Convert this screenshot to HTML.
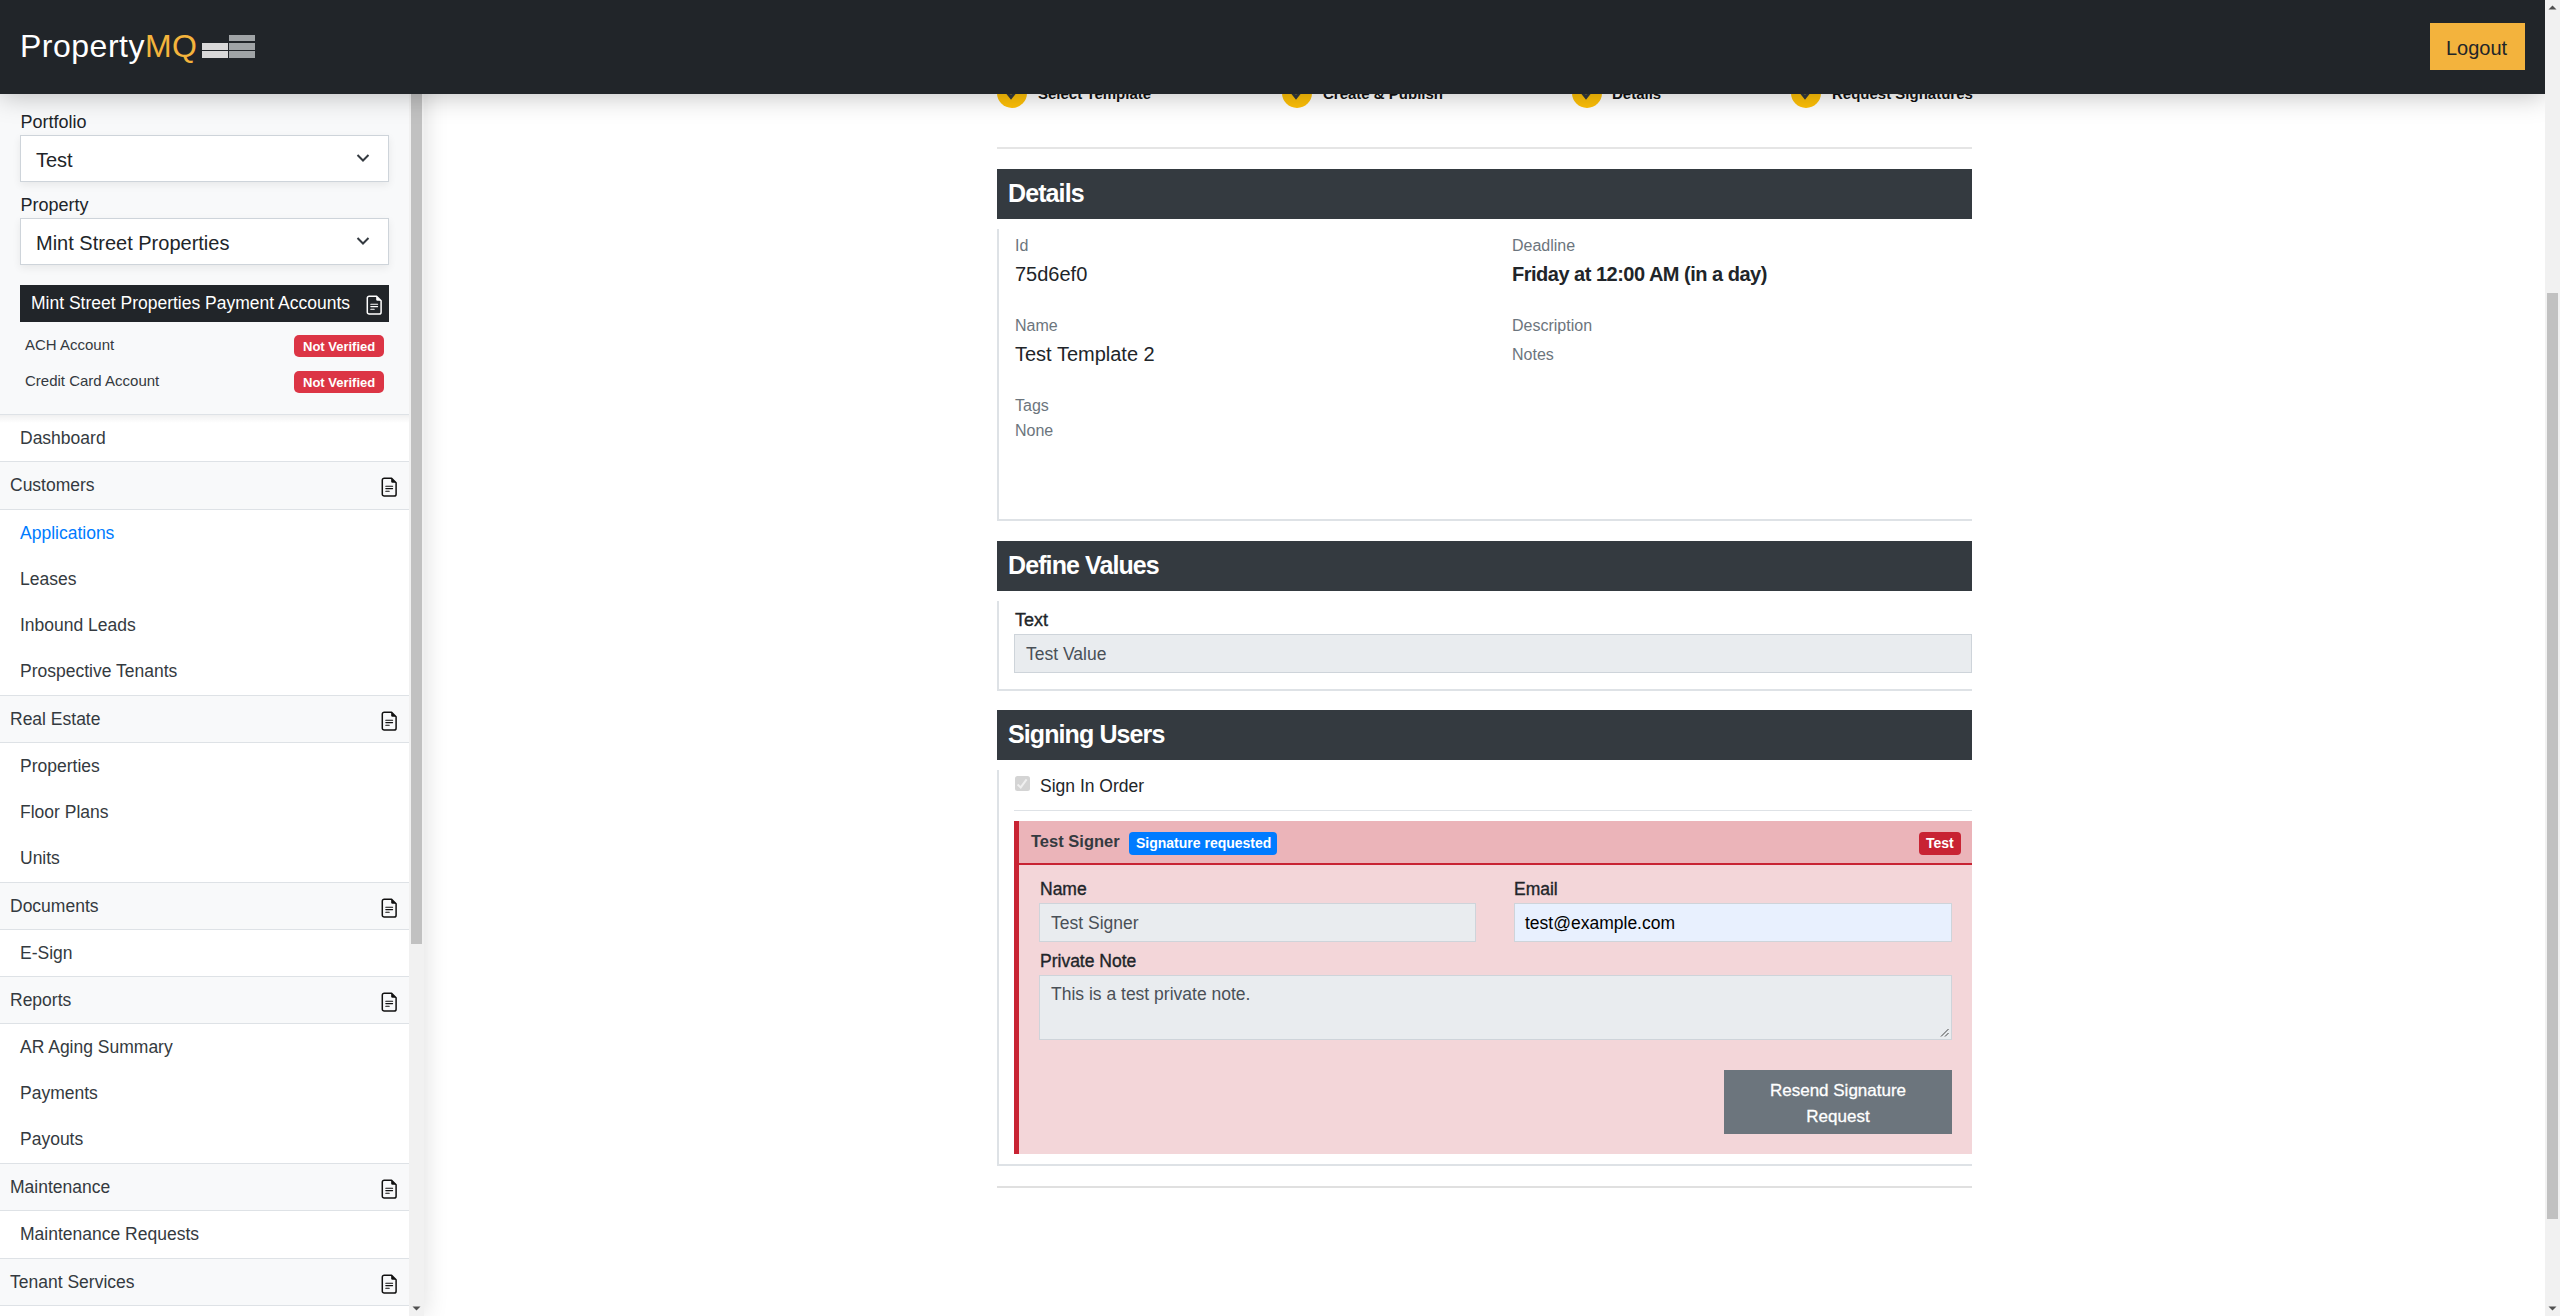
<!DOCTYPE html>
<html><head><meta charset="utf-8"><style>
*{box-sizing:border-box;margin:0;padding:0}
html,body{width:2560px;height:1316px;overflow:hidden;background:#fff;font-family:"Liberation Sans",sans-serif;color:#212529}
.a{position:absolute}
.t{position:absolute;white-space:nowrap;line-height:1}
#hdr{position:absolute;left:0;top:0;width:2545px;height:94px;background:#212529;z-index:20;box-shadow:0 2px 25px rgba(0,0,0,.25)}
#sb{position:absolute;left:0;top:0;width:424px;height:1316px;background:#fff;z-index:10;box-shadow:2px 0 22px rgba(0,0,0,.12)}
.ico{position:absolute;left:379px;width:20px;height:20px}
.inp{position:absolute;background:#e9ecef;border:1px solid #ced4da}
</style></head><body>
<div class="a" style="left:997px;top:78px;width:30px;height:30px;background:#ffc107;border-radius:50%"></div>
<svg class="a" style="left:1002px;top:80px;width:20px;height:20px" viewBox="0 0 20 20"><path d="M4 11L9 17.3L14 11" fill="none" stroke="#343a40" stroke-width="3"/></svg>
<div class="t" style="left:1038px;top:86.00px;font-size:15px;font-weight:bold;color:#111;">Select Template</div>
<div class="a" style="left:1282px;top:78px;width:30px;height:30px;background:#ffc107;border-radius:50%"></div>
<svg class="a" style="left:1287px;top:80px;width:20px;height:20px" viewBox="0 0 20 20"><path d="M4 11L9 17.3L14 11" fill="none" stroke="#343a40" stroke-width="3"/></svg>
<div class="t" style="left:1323px;top:86.00px;font-size:15px;font-weight:bold;color:#111;">Create &amp; Publish</div>
<div class="a" style="left:1572px;top:78px;width:30px;height:30px;background:#ffc107;border-radius:50%"></div>
<svg class="a" style="left:1577px;top:80px;width:20px;height:20px" viewBox="0 0 20 20"><path d="M4 11L9 17.3L14 11" fill="none" stroke="#343a40" stroke-width="3"/></svg>
<div class="t" style="left:1612px;top:86.00px;font-size:15px;font-weight:bold;color:#111;">Details</div>
<div class="a" style="left:1791px;top:78px;width:30px;height:30px;background:#ffc107;border-radius:50%"></div>
<svg class="a" style="left:1796px;top:80px;width:20px;height:20px" viewBox="0 0 20 20"><path d="M4 11L9 17.3L14 11" fill="none" stroke="#343a40" stroke-width="3"/></svg>
<div class="t" style="left:1832px;top:86.00px;font-size:15px;font-weight:bold;color:#111;">Request Signatures</div>
<div class="a" style="left:997px;top:147px;width:975px;height:2px;background:#e5e5e5;"></div>
<div class="a" style="left:997px;top:169px;width:975px;height:50px;background:#343a40;"></div>
<div class="t" style="left:1008px;top:181.00px;font-size:25px;font-weight:bold;color:#fff;letter-spacing:-0.9px;">Details</div>
<div class="a" style="left:997px;top:229px;width:975px;height:292px;border-left:2px solid #dee2e6;border-bottom:2px solid #dee2e6"></div>
<div class="t" style="left:1015px;top:238.00px;font-size:16px;color:#6c757d;">Id</div>
<div class="t" style="left:1015px;top:264.00px;font-size:20px;">75d6ef0</div>
<div class="t" style="left:1015px;top:318.00px;font-size:16px;color:#6c757d;">Name</div>
<div class="t" style="left:1015px;top:344.00px;font-size:20px;">Test Template 2</div>
<div class="t" style="left:1015px;top:398.00px;font-size:16px;color:#6c757d;">Tags</div>
<div class="t" style="left:1015px;top:423.00px;font-size:16px;color:#6c757d;">None</div>
<div class="t" style="left:1512px;top:238.00px;font-size:16px;color:#6c757d;">Deadline</div>
<div class="t" style="left:1512px;top:264.00px;font-size:20px;font-weight:bold;letter-spacing:-0.5px;">Friday at 12:00 AM (in a day)</div>
<div class="t" style="left:1512px;top:318.00px;font-size:16px;color:#6c757d;">Description</div>
<div class="t" style="left:1512px;top:347.00px;font-size:16px;color:#6c757d;">Notes</div>
<div class="a" style="left:997px;top:541px;width:975px;height:50px;background:#343a40;"></div>
<div class="t" style="left:1008px;top:553.00px;font-size:25px;font-weight:bold;color:#fff;letter-spacing:-0.9px;">Define Values</div>
<div class="a" style="left:997px;top:601px;width:975px;height:90px;border-left:2px solid #dee2e6;border-bottom:2px solid #dee2e6"></div>
<div class="t" style="left:1015px;top:611.00px;font-size:18px;-webkit-text-stroke:0.35px currentColor;">Text</div>
<div class="inp" style="left:1014px;top:634px;width:958px;height:39px"></div>
<div class="t" style="left:1026px;top:646.00px;font-size:17.5px;color:#495057;">Test Value</div>
<div class="a" style="left:997px;top:710px;width:975px;height:50px;background:#343a40;"></div>
<div class="t" style="left:1008px;top:722.00px;font-size:25px;font-weight:bold;color:#fff;letter-spacing:-0.9px;">Signing Users</div>
<div class="a" style="left:997px;top:770px;width:975px;height:396px;border-left:2px solid #dee2e6;border-bottom:2px solid #dee2e6"></div>
<div class="a" style="left:1015px;top:776px;width:15px;height:15px;background:#d4d4d4;border-radius:2.5px"></div>
<svg class="a" style="left:1015px;top:776px;width:15px;height:15px" viewBox="0 0 15 15"><path d="M2.6 8.6L5.7 11.4L11.6 3.4" fill="none" stroke="#efefef" stroke-width="2"/></svg>
<div class="t" style="left:1040px;top:778.00px;font-size:17.5px;">Sign In Order</div>
<div class="a" style="left:1014px;top:810px;width:958px;height:1px;background:#dee2e6;"></div>
<div class="a" style="left:1014px;top:821px;width:958px;height:333px;background:#f3d6d9;"></div>
<div class="a" style="left:1019px;top:821px;width:953px;height:42px;background:#ebb4b9;"></div>
<div class="a" style="left:1019px;top:863px;width:953px;height:2px;background:#c82333;"></div>
<div class="a" style="left:1014px;top:821px;width:5px;height:333px;background:#c82333;"></div>
<div class="t" style="left:1031px;top:833.00px;font-size:16.5px;font-weight:bold;color:#343a40;">Test Signer</div>
<div class="a" style="left:1129px;top:832px;width:148px;height:23px;background:#007bff;border-radius:4px"></div>
<div class="t" style="left:1136px;top:836.00px;font-size:14px;font-weight:bold;color:#fff;">Signature requested</div>
<div class="a" style="left:1919px;top:832px;width:42px;height:23px;background:#c82333;border-radius:4px"></div>
<div class="t" style="left:1926px;top:836.00px;font-size:14px;font-weight:bold;color:#fff;">Test</div>
<div class="t" style="left:1040px;top:881.00px;font-size:17.5px;-webkit-text-stroke:0.35px currentColor;">Name</div>
<div class="inp" style="left:1039px;top:903px;width:437px;height:39px"></div>
<div class="t" style="left:1051px;top:915.00px;font-size:17.5px;color:#495057;">Test Signer</div>
<div class="t" style="left:1514px;top:881.00px;font-size:17.5px;-webkit-text-stroke:0.35px currentColor;">Email</div>
<div class="inp" style="left:1514px;top:903px;width:438px;height:39px;background:#e8f0fe"></div>
<div class="t" style="left:1525px;top:915.00px;font-size:17.5px;color:#000;">test@example.com</div>
<div class="t" style="left:1040px;top:953.00px;font-size:17.5px;-webkit-text-stroke:0.35px currentColor;">Private Note</div>
<div class="inp" style="left:1039px;top:975px;width:913px;height:65px"></div>
<svg class="a" style="left:1938px;top:1026px;width:12px;height:12px" viewBox="0 0 12 12"><path d="M10.5 3L3 10.5M10.5 7L7 10.5" stroke="#444" stroke-width="1"/></svg>
<div class="t" style="left:1051px;top:986.00px;font-size:17.5px;color:#495057;">This is a test private note.</div>
<div class="a" style="left:1724px;top:1070px;width:228px;height:64px;background:#6c757d;"></div>
<div class="a" style="left:1724px;top:1078px;width:228px;text-align:center;font-size:17px;line-height:26px;color:#fff;-webkit-text-stroke:0.3px #fff">Resend Signature<br>Request</div>
<div class="a" style="left:997px;top:1186px;width:975px;height:2px;background:#e0e0e0;"></div>
<div id="sb">
<div class="a" style="left:0px;top:0px;width:409px;height:414px;background:#f8f9fa;"></div>
<div class="t" style="left:20.5px;top:113.00px;font-size:18px;color:#212529;">Portfolio</div>
<div class="a" style="left:20px;top:135px;width:369px;height:47px;background:#fff;border:1px solid #ced4da;box-shadow:0 3px 8px rgba(0,0,0,.07)"></div>
<div class="t" style="left:36px;top:150.00px;font-size:20px;color:#212529;">Test</div>
<svg class="a" style="left:355px;top:150px;width:16px;height:16px" viewBox="0 0 16 16"><path d="M2.5 5L8 10.5L13.5 5" fill="none" stroke="#343a40" stroke-width="2"/></svg>
<div class="t" style="left:20.5px;top:196.00px;font-size:18px;color:#212529;">Property</div>
<div class="a" style="left:20px;top:218px;width:369px;height:47px;background:#fff;border:1px solid #ced4da;box-shadow:0 3px 8px rgba(0,0,0,.07)"></div>
<div class="t" style="left:36px;top:233.00px;font-size:20px;color:#212529;">Mint Street Properties</div>
<svg class="a" style="left:355px;top:233px;width:16px;height:16px" viewBox="0 0 16 16"><path d="M2.5 5L8 10.5L13.5 5" fill="none" stroke="#343a40" stroke-width="2"/></svg>
<div class="a" style="left:20px;top:285px;width:369px;height:37px;background:#212529;"></div>
<div class="t" style="left:31px;top:295.00px;font-size:17.5px;color:#fff;">Mint Street Properties Payment Accounts</div>
<svg class="ico" style="top:295px;left:365px" viewBox="0 0 20 20"><path d="M4.2 1.25H11.6L16.1 5.75V17.2A1.9 1.9 0 0 1 14.2 19.1H4.2A1.9 1.9 0 0 1 2.3 17.2V3.15A1.9 1.9 0 0 1 4.2 1.25Z" fill="none" stroke="#fff" stroke-width="1.5" stroke-linejoin="round"/><path d="M11.2 1.3V4.6A1.2 1.2 0 0 0 12.4 5.8H16.1Z" fill="#fff"/><path d="M5.8 9.3H12.6M5.8 11.6H12.6M5.8 14.3H9.2" stroke="#fff" stroke-width="1.1" stroke-linecap="round"/></svg>
<div class="t" style="left:25px;top:337.00px;font-size:15px;color:#343a40;">ACH Account</div>
<div class="a" style="left:294px;top:335px;width:90px;height:22px;background:#dc3545;border-radius:5px"></div>
<div class="t" style="left:303px;top:340.00px;font-size:13px;font-weight:bold;color:#fff;">Not Verified</div>
<div class="t" style="left:25px;top:373.00px;font-size:15px;color:#343a40;">Credit Card Account</div>
<div class="a" style="left:294px;top:371px;width:90px;height:22px;background:#dc3545;border-radius:5px"></div>
<div class="t" style="left:303px;top:376.00px;font-size:13px;font-weight:bold;color:#fff;">Not Verified</div>
<div class="t" style="left:20px;top:430.00px;font-size:17.5px;color:#343a40;">Dashboard</div>
<div class="a" style="left:0px;top:462px;width:409px;height:47px;background:#f8f9fa;"></div>
<div class="t" style="left:10px;top:477.00px;font-size:17.5px;color:#343a40;">Customers</div>
<svg class="ico" style="top:477px;left:380px" viewBox="0 0 20 20"><path d="M4.2 1.25H11.6L16.1 5.75V17.2A1.9 1.9 0 0 1 14.2 19.1H4.2A1.9 1.9 0 0 1 2.3 17.2V3.15A1.9 1.9 0 0 1 4.2 1.25Z" fill="none" stroke="#111" stroke-width="1.5" stroke-linejoin="round"/><path d="M11.2 1.3V4.6A1.2 1.2 0 0 0 12.4 5.8H16.1Z" fill="#111"/><path d="M5.8 9.3H12.6M5.8 11.6H12.6M5.8 14.3H9.2" stroke="#111" stroke-width="1.1" stroke-linecap="round"/></svg>
<div class="t" style="left:20px;top:525.00px;font-size:17.5px;color:#007bff;">Applications</div>
<div class="t" style="left:20px;top:571.00px;font-size:17.5px;color:#343a40;">Leases</div>
<div class="t" style="left:20px;top:617.00px;font-size:17.5px;color:#343a40;">Inbound Leads</div>
<div class="t" style="left:20px;top:663.00px;font-size:17.5px;color:#343a40;">Prospective Tenants</div>
<div class="a" style="left:0px;top:696px;width:409px;height:46px;background:#f8f9fa;"></div>
<div class="t" style="left:10px;top:711.00px;font-size:17.5px;color:#343a40;">Real Estate</div>
<svg class="ico" style="top:711px;left:380px" viewBox="0 0 20 20"><path d="M4.2 1.25H11.6L16.1 5.75V17.2A1.9 1.9 0 0 1 14.2 19.1H4.2A1.9 1.9 0 0 1 2.3 17.2V3.15A1.9 1.9 0 0 1 4.2 1.25Z" fill="none" stroke="#111" stroke-width="1.5" stroke-linejoin="round"/><path d="M11.2 1.3V4.6A1.2 1.2 0 0 0 12.4 5.8H16.1Z" fill="#111"/><path d="M5.8 9.3H12.6M5.8 11.6H12.6M5.8 14.3H9.2" stroke="#111" stroke-width="1.1" stroke-linecap="round"/></svg>
<div class="t" style="left:20px;top:758.00px;font-size:17.5px;color:#343a40;">Properties</div>
<div class="t" style="left:20px;top:804.00px;font-size:17.5px;color:#343a40;">Floor Plans</div>
<div class="t" style="left:20px;top:850.00px;font-size:17.5px;color:#343a40;">Units</div>
<div class="a" style="left:0px;top:883px;width:409px;height:46px;background:#f8f9fa;"></div>
<div class="t" style="left:10px;top:898.00px;font-size:17.5px;color:#343a40;">Documents</div>
<svg class="ico" style="top:898px;left:380px" viewBox="0 0 20 20"><path d="M4.2 1.25H11.6L16.1 5.75V17.2A1.9 1.9 0 0 1 14.2 19.1H4.2A1.9 1.9 0 0 1 2.3 17.2V3.15A1.9 1.9 0 0 1 4.2 1.25Z" fill="none" stroke="#111" stroke-width="1.5" stroke-linejoin="round"/><path d="M11.2 1.3V4.6A1.2 1.2 0 0 0 12.4 5.8H16.1Z" fill="#111"/><path d="M5.8 9.3H12.6M5.8 11.6H12.6M5.8 14.3H9.2" stroke="#111" stroke-width="1.1" stroke-linecap="round"/></svg>
<div class="t" style="left:20px;top:945.00px;font-size:17.5px;color:#343a40;">E-Sign</div>
<div class="a" style="left:0px;top:977px;width:409px;height:46px;background:#f8f9fa;"></div>
<div class="t" style="left:10px;top:992.00px;font-size:17.5px;color:#343a40;">Reports</div>
<svg class="ico" style="top:992px;left:380px" viewBox="0 0 20 20"><path d="M4.2 1.25H11.6L16.1 5.75V17.2A1.9 1.9 0 0 1 14.2 19.1H4.2A1.9 1.9 0 0 1 2.3 17.2V3.15A1.9 1.9 0 0 1 4.2 1.25Z" fill="none" stroke="#111" stroke-width="1.5" stroke-linejoin="round"/><path d="M11.2 1.3V4.6A1.2 1.2 0 0 0 12.4 5.8H16.1Z" fill="#111"/><path d="M5.8 9.3H12.6M5.8 11.6H12.6M5.8 14.3H9.2" stroke="#111" stroke-width="1.1" stroke-linecap="round"/></svg>
<div class="t" style="left:20px;top:1039.00px;font-size:17.5px;color:#343a40;">AR Aging Summary</div>
<div class="t" style="left:20px;top:1085.00px;font-size:17.5px;color:#343a40;">Payments</div>
<div class="t" style="left:20px;top:1131.00px;font-size:17.5px;color:#343a40;">Payouts</div>
<div class="a" style="left:0px;top:1164px;width:409px;height:46px;background:#f8f9fa;"></div>
<div class="t" style="left:10px;top:1179.00px;font-size:17.5px;color:#343a40;">Maintenance</div>
<svg class="ico" style="top:1179px;left:380px" viewBox="0 0 20 20"><path d="M4.2 1.25H11.6L16.1 5.75V17.2A1.9 1.9 0 0 1 14.2 19.1H4.2A1.9 1.9 0 0 1 2.3 17.2V3.15A1.9 1.9 0 0 1 4.2 1.25Z" fill="none" stroke="#111" stroke-width="1.5" stroke-linejoin="round"/><path d="M11.2 1.3V4.6A1.2 1.2 0 0 0 12.4 5.8H16.1Z" fill="#111"/><path d="M5.8 9.3H12.6M5.8 11.6H12.6M5.8 14.3H9.2" stroke="#111" stroke-width="1.1" stroke-linecap="round"/></svg>
<div class="t" style="left:20px;top:1226.00px;font-size:17.5px;color:#343a40;">Maintenance Requests</div>
<div class="a" style="left:0px;top:1259px;width:409px;height:46px;background:#f8f9fa;"></div>
<div class="t" style="left:10px;top:1274.00px;font-size:17.5px;color:#343a40;">Tenant Services</div>
<svg class="ico" style="top:1274px;left:380px" viewBox="0 0 20 20"><path d="M4.2 1.25H11.6L16.1 5.75V17.2A1.9 1.9 0 0 1 14.2 19.1H4.2A1.9 1.9 0 0 1 2.3 17.2V3.15A1.9 1.9 0 0 1 4.2 1.25Z" fill="none" stroke="#111" stroke-width="1.5" stroke-linejoin="round"/><path d="M11.2 1.3V4.6A1.2 1.2 0 0 0 12.4 5.8H16.1Z" fill="#111"/><path d="M5.8 9.3H12.6M5.8 11.6H12.6M5.8 14.3H9.2" stroke="#111" stroke-width="1.1" stroke-linecap="round"/></svg>
<div class="a" style="left:0px;top:414px;width:409px;height:1px;background:#dee2e6;"></div>
<div class="a" style="left:0px;top:461px;width:409px;height:1px;background:#dee2e6;"></div>
<div class="a" style="left:0px;top:509px;width:409px;height:1px;background:#dee2e6;"></div>
<div class="a" style="left:0px;top:695px;width:409px;height:1px;background:#dee2e6;"></div>
<div class="a" style="left:0px;top:742px;width:409px;height:1px;background:#dee2e6;"></div>
<div class="a" style="left:0px;top:882px;width:409px;height:1px;background:#dee2e6;"></div>
<div class="a" style="left:0px;top:929px;width:409px;height:1px;background:#dee2e6;"></div>
<div class="a" style="left:0px;top:976px;width:409px;height:1px;background:#dee2e6;"></div>
<div class="a" style="left:0px;top:1023px;width:409px;height:1px;background:#dee2e6;"></div>
<div class="a" style="left:0px;top:1163px;width:409px;height:1px;background:#dee2e6;"></div>
<div class="a" style="left:0px;top:1210px;width:409px;height:1px;background:#dee2e6;"></div>
<div class="a" style="left:0px;top:1258px;width:409px;height:1px;background:#dee2e6;"></div>
<div class="a" style="left:0px;top:1305px;width:409px;height:1px;background:#dee2e6;"></div>
<div class="a" style="left:0px;top:415px;width:409px;height:8px;background:linear-gradient(rgba(0,0,0,.06),rgba(0,0,0,0));"></div>
<div class="a" style="left:409px;top:0px;width:15px;height:1316px;background:#f1f1f1;"></div>
<div class="a" style="left:411px;top:94px;width:11px;height:850px;background:#c1c1c1;"></div>
<svg class="a" style="left:409px;top:1301px;width:15px;height:15px" viewBox="0 0 15 15"><path d="M3.5 5.5H11.5L7.5 9.5Z" fill="#505050"/></svg>
</div>
<div id="hdr">
<div class="t" style="left:20px;top:30.00px;font-size:32px;color:#fff;letter-spacing:0.5px;">Property<span style="color:#f4b43c">MQ</span></div>
<div class="a" style="left:202px;top:43px;width:26px;height:7px;background:#d9d9d9;"></div>
<div class="a" style="left:202px;top:51px;width:26px;height:7px;background:#d9d9d9;"></div>
<div class="a" style="left:229px;top:35px;width:26px;height:6px;background:#a0a4a6;"></div>
<div class="a" style="left:229px;top:43px;width:26px;height:7px;background:#a0a4a6;"></div>
<div class="a" style="left:229px;top:51px;width:26px;height:7px;background:#a0a4a6;"></div>
<div class="a" style="left:2430px;top:23px;width:95px;height:47px;background:#f3b33d;"></div>
<div class="t" style="left:2446px;top:38.00px;font-size:20px;color:#212529;">Logout</div>
</div>
<div class="a" style="left:2545px;top:0;width:15px;height:1316px;z-index:30">
<div class="a" style="left:0px;top:0px;width:15px;height:1316px;background:#f1f1f1;"></div>
<div class="a" style="left:2px;top:293px;width:11px;height:926px;background:#c1c1c1;"></div>
<svg class="a" style="left:0;top:0;width:15px;height:15px" viewBox="0 0 15 15"><path d="M3.5 9.5H11.5L7.5 5.5Z" fill="#505050"/></svg>
<svg class="a" style="left:0;top:1301px;width:15px;height:15px" viewBox="0 0 15 15"><path d="M3.5 5.5H11.5L7.5 9.5Z" fill="#505050"/></svg>
</div>
</body></html>
